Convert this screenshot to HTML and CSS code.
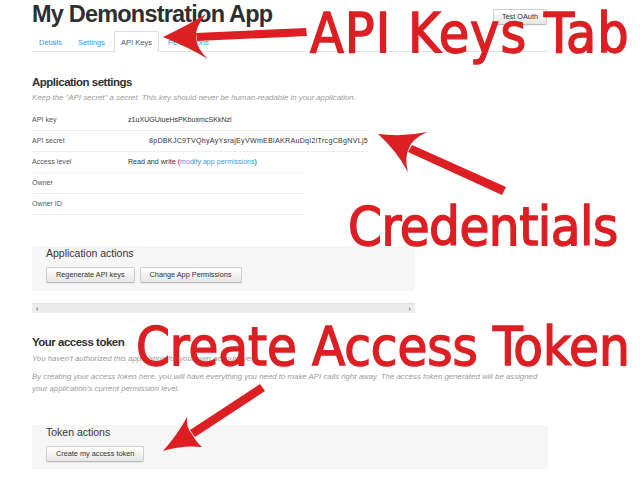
FILE: index.html
```html
<!DOCTYPE html>
<html>
<head>
<meta charset="utf-8">
<link rel="stylesheet" href="styles.css">
</head>
<body>
<div class="page">
  <header class="head">
    <h1 class="title">My Demonstration App</h1>
    <button class="btn btn-oauth">Test OAuth</button>
  </header>
  <nav class="tabs">
    <a class="tab">Details</a>
    <a class="tab">Settings</a>
    <a class="tab active">API Keys</a>
    <a class="tab">Permissions</a>
  </nav>

  <section class="settings">
    <h2 class="h2">Application settings</h2>
    <p class="hint">Keep the "API secret" a secret. This key should never be human-readable in your application.</p>
    <div class="rows">
      <div class="row wide"><span class="label">API key</span><span class="val">z1uXUGUiueHsPKbuxmcSKkNzl</span></div>
      <div class="row wide"><span class="label">API secret</span><span class="val secret">8pDBKJC9TVQhyAyYsrajEyVWmEBlAKRAuDqI2lTrcgCBgNVLj5</span></div>
      <div class="row"><span class="label">Access level</span><span class="val">Read and write (<a class="link">modify app permissions</a>)</span></div>
      <div class="row"><span class="label">Owner</span></div>
      <div class="row"><span class="label">Owner ID</span></div>
    </div>
  </section>

  <div class="panel app-panel">
    <h3 class="panel-title">Application actions</h3>
    <div class="btns">
      <button class="btn">Regenerate API keys</button>
      <button class="btn">Change App Permissions</button>
    </div>
  </div>

  <div class="scrollbar"><span class="arr arr-l"></span><span class="arr arr-r"></span></div>

  <section class="token">
    <h2 class="h2">Your access token</h2>
    <p class="hint">You haven't authorized this application for your own account yet.</p>
    <p class="hint para">By creating your access token here, you will have everything you need to make API calls right away. The access token generated will be assigned your application's current permission level.</p>
  </section>

  <div class="panel token-panel">
    <h3 class="panel-title">Token actions</h3>
    <div class="btns">
      <button class="btn">Create my access token</button>
    </div>
  </div>
</div>

<div class="annot">
  <svg class="arrows" width="640" height="480" viewBox="0 0 640 480">
    <g fill="#dc1f23" stroke="none">
      <path d="M306,28 L307,36 L197,41 L196,33 Z"/>
      <path d="M163,37 Q190,24 206,14 Q195,27 196,37 Q196,48 208,59 Q188,47 163,37 Z"/>
      <path d="M506,187 L502,195 L408,152 L412,145 Z"/>
      <path d="M378,134 Q404,137 427,132 Q412,139 409,148 Q404,158 408,172 Q396,150 378,134 Z"/>
      <path d="M260,384 L265,391 L195,437 L190,430 Z"/>
      <path d="M163,451 Q178,434 187,417 Q186,428 192,434 Q196,442 202,447 Q182,445 163,451 Z"/>
    </g>
  </svg>
  <div class="note note-tab">API Keys Tab</div>
  <div class="note note-cred">Credentials</div>
  <div class="note note-token">Create Access Token</div>
</div>
</body>
</html>
```

FILE: styles.css
```css
html, body {
  margin: 0;
  padding: 0;
  background: #fff;
}
body {
  font-family: "Liberation Sans", Arial, sans-serif;
  color: #333;
  position: relative;
  width: 640px;
  height: 480px;
  overflow: hidden;
}
.page {
  width: 516px;
  padding-left: 32px;
}
.head {
  display: flex;
  justify-content: space-between;
  align-items: flex-start;
  height: 28px;
}
.title {
  margin: 0;
  font-size: 23.5px;
  line-height: 28px;
  font-weight: bold;
  letter-spacing: -0.8px;
  color: #2f2f2f;
}
.btn {
  font-family: "Liberation Sans", Arial, sans-serif;
  font-size: 7.3px;
  color: #333;
  height: 16px;
  padding: 0 9px;
  border: 1px solid #cfcfcf;
  border-bottom-color: #b9b9b9;
  border-radius: 2px;
  background: linear-gradient(#ffffff, #e6e6e6);
  box-shadow: 0 1px 1px rgba(0, 0, 0, 0.06);
  line-height: 14px;
}
.btn-oauth {
  margin-top: 9px;
  margin-right: 1px;
  padding: 0 8px;
}
.tabs {
  display: flex;
  margin-top: 3px;
  border-bottom: 1px solid #e2e2e2;
  height: 20px;
}
.tab {
  display: block;
  height: 20px;
  box-sizing: border-box;
  padding: 0 6px;
  margin-right: 2px;
  font-size: 7.5px;
  line-height: 21px;
  color: #3a9ad9;
  border: 1px solid transparent;
  border-bottom: none;
}
.tab.active {
  color: #555;
  background: #fff;
  border-color: #ddd;
  height: 21px;
  border-radius: 2px 2px 0 0;
}
.settings {
  margin-top: 23px;
}
.h2 {
  margin: 0;
  font-size: 11.5px;
  line-height: 14px;
  font-weight: bold;
  letter-spacing: -0.5px;
  color: #2f2f2f;
}
.hint {
  margin: 4px 0 0;
  font-size: 7.85px;
  line-height: 10px;
  font-style: italic;
  color: #9a9a9a;
}
.rows {
  margin-top: 7px;
}
.row {
  display: flex;
  align-items: center;
  height: 20px;
  width: 273px;
  border-bottom: 1px solid #eeeeee;
  font-size: 7.1px;
}
.row.wide {
  width: 336px;
}
.label {
  width: 96px;
  flex: none;
  color: #555;
}
.val {
  color: #333;
  white-space: nowrap;
}
.val.secret {
  padding-left: 21px;
  letter-spacing: 0.28px;
}
.link {
  color: #3a9ad9;
}
.panel {
  background: #f6f6f6;
  border-radius: 3px;
  padding: 1px 14px 9px;
  box-sizing: border-box;
}
.app-panel {
  width: 383px;
  margin-top: 31px;
  padding-bottom: 8px;
}
.panel-title {
  margin: 0;
  font-size: 10.5px;
  line-height: 13px;
  font-weight: normal;
  color: #333;
}
.btns {
  display: flex;
  gap: 5px;
  margin-top: 7px;
}
.scrollbar {
  position: relative;
  width: 383px;
  height: 9px;
  margin-top: 12px;
  background: #ececec;
  border-top: 1px solid #e2e2e2;
}
.arr {
  position: absolute;
  top: 3px;
  width: 0;
  height: 0;
  border-top: 2px solid transparent;
  border-bottom: 2px solid transparent;
}
.arr-l {
  left: 4px;
  border-right: 2px solid #999;
}
.arr-r {
  right: 4px;
  border-left: 2px solid #999;
}
.token {
  margin-top: 22px;
}
.token .hint {
  margin-top: 5px;
}
.token .hint.para {
  margin-top: 7px;
  line-height: 12px;
}
.token-panel {
  width: 516px;
  margin-top: 30px;
  padding-top: 1px;
  padding-bottom: 7px;
}
.token-panel .btns {
  margin-top: 7px;
}
.annot {
  position: absolute;
  left: 0;
  top: 0;
  width: 640px;
  height: 480px;
  pointer-events: none;
}
.arrows {
  position: absolute;
  left: 0;
  top: 0;
}
.note {
  position: absolute;
  font-family: "DejaVu Sans Condensed", "DejaVu Sans", sans-serif;
  font-stretch: condensed;
  color: #dc1f23;
  -webkit-text-stroke: 1.4px #dc1f23;
  line-height: 1;
  white-space: nowrap;
}
.note-tab {
  left: 310px;
  top: 6px;
  font-size: 55px;
  letter-spacing: 1px;
}
.note-cred {
  left: 348px;
  top: 200px;
  font-size: 54px;
  letter-spacing: -0.5px;
}
.note-token {
  left: 136px;
  top: 320px;
  font-size: 54px;
  letter-spacing: -0.1px;
}
```
